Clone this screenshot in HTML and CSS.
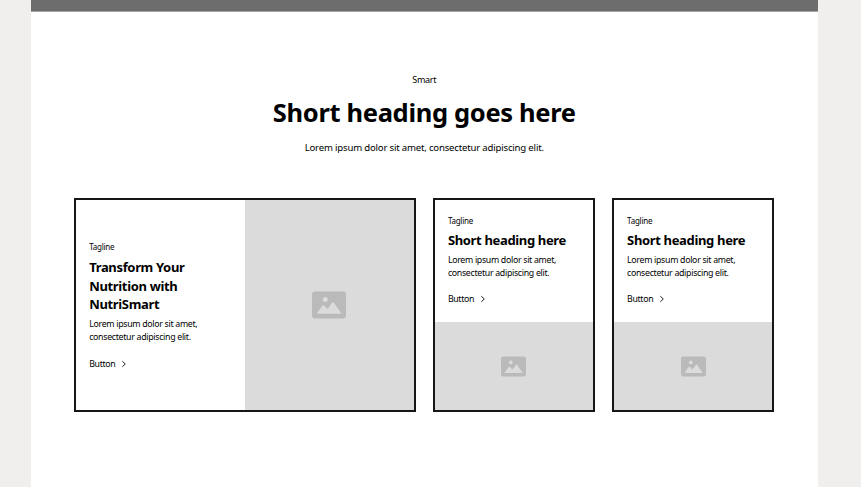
FILE: index.html
```
<!DOCTYPE html>
<html lang="en">
<head>
<meta charset="utf-8">
<title>Short heading goes here</title>
<link rel="stylesheet" href="styles.css">
</head>
<body>
<svg class="sprite" aria-hidden="true">
  <symbol id="image" viewBox="0 0 34 28">
    <path fill-rule="evenodd" d="M3 .5h28a3 3 0 0 1 3 3v21a3 3 0 0 1-3 3H3a3 3 0 0 1-3-3v-21a3 3 0 0 1 3-3ZM13.3 6a2.5 2.5 0 1 0 0 5 2.5 2.5 0 0 0 0-5ZM5.8 22.8h22.6q1.2 0 .5-1L22 11.8q-.9-1.3-1.9 0l-4.6 6.2-3.2-3.2q-1-.9-1.9 0L5.3 21.7q-.6 1.1.5 1.1Z"/>
  </symbol>
  <symbol id="chevron" viewBox="0 0 6 8"><path d="M1.3 1.2 4.3 4 1.3 6.8" fill="none" stroke="#222" stroke-width="1"/></symbol>
</svg>
<main class="page">
  <div class="topbar"></div>
  <header class="intro">
    <p class="eyebrow">Smart</p>
    <h1>Short heading goes here</h1>
    <p class="lead">Lorem ipsum dolor sit amet, consectetur adipiscing elit.</p>
  </header>
  <section class="cards">
    <article class="card wide">
      <div class="body">
        <p class="tagline">Tagline</p>
        <h2>Transform Your<br>Nutrition with<br>NutriSmart</h2>
        <p class="text">Lorem ipsum dolor sit amet,<br>consectetur adipiscing elit.</p>
        <a class="button">Button<svg class="chevron"><use href="#chevron"/></svg></a>
      </div>
      <div class="media"><svg class="image"><use href="#image"/></svg></div>
    </article>
    <article class="card">
      <div class="body">
        <p class="tagline">Tagline</p>
        <h2>Short heading here</h2>
        <p class="text">Lorem ipsum dolor sit amet,<br>consectetur adipiscing elit.</p>
        <a class="button">Button<svg class="chevron"><use href="#chevron"/></svg></a>
      </div>
      <div class="media"><svg class="image"><use href="#image"/></svg></div>
    </article>
    <article class="card">
      <div class="body">
        <p class="tagline">Tagline</p>
        <h2>Short heading here</h2>
        <p class="text">Lorem ipsum dolor sit amet,<br>consectetur adipiscing elit.</p>
        <a class="button">Button<svg class="chevron"><use href="#chevron"/></svg></a>
      </div>
      <div class="media"><svg class="image"><use href="#image"/></svg></div>
    </article>
  </section>
</main>
</body>
</html>
```
FILE: styles.css
```
* { box-sizing: border-box; margin: 0; padding: 0; }
body {
  background: #f0efed;
  color: #000;
  font-family: "Noto Sans", "Open Sans", sans-serif;
  overflow: hidden;
}
.sprite { display: none; }
.page { width: 787.5px; height: 487px; margin-left: 30.5px; background: #fff; }
.topbar { height: 12px; background: #6d6d6d; border-bottom: 1px solid #a6a6a6; }
.intro { text-align: center; padding-top: 60px; white-space: nowrap; }
.eyebrow { font-size: 9px; line-height: 15px; letter-spacing: -.25px; }
h1 { margin-top: 9px; font-size: 25.5px; line-height: 32px; font-weight: 700; letter-spacing: -.33px; }
.lead { margin-top: 12px; font-size: 9.6px; line-height: 16px; letter-spacing: -.19px; }
.cards {
  display: grid;
  grid-template-columns: 341.5px 162px 162px;
  column-gap: 17.2px;
  height: 214px;
  margin: 42px 0 0 43.7px;
}
.card { display: flex; flex-direction: column; border: 2px solid #161616; white-space: nowrap; }
.body { flex: 0 0 122px; padding: 14px 0 0 13px; }
.media { flex: 1; display: flex; align-items: center; justify-content: center; background: #dbdbdb; }
.wide { flex-direction: row; }
.wide .body { flex: 0 0 169px; padding-top: 40px; }
.wide h2 { margin-top: 5px; }
.wide .button { margin-top: 14px; }
.tagline { font-size: 8px; line-height: 13px; letter-spacing: -.24px; }
h2 { margin-top: 4px; font-size: 13px; line-height: 18.5px; font-weight: 700; letter-spacing: -.34px; }
.text { margin-top: 4px; font-size: 8.8px; line-height: 13px; letter-spacing: -.31px; }
.button { display: flex; align-items: center; gap: 6px; margin-top: 13px; font-size: 8.8px; line-height: 13px; letter-spacing: -.35px; }
.chevron { width: 6px; height: 8px; }
.image { width: 25px; height: 21px; fill: #bababa; }
.wide .image { width: 34px; height: 28px; }
```
